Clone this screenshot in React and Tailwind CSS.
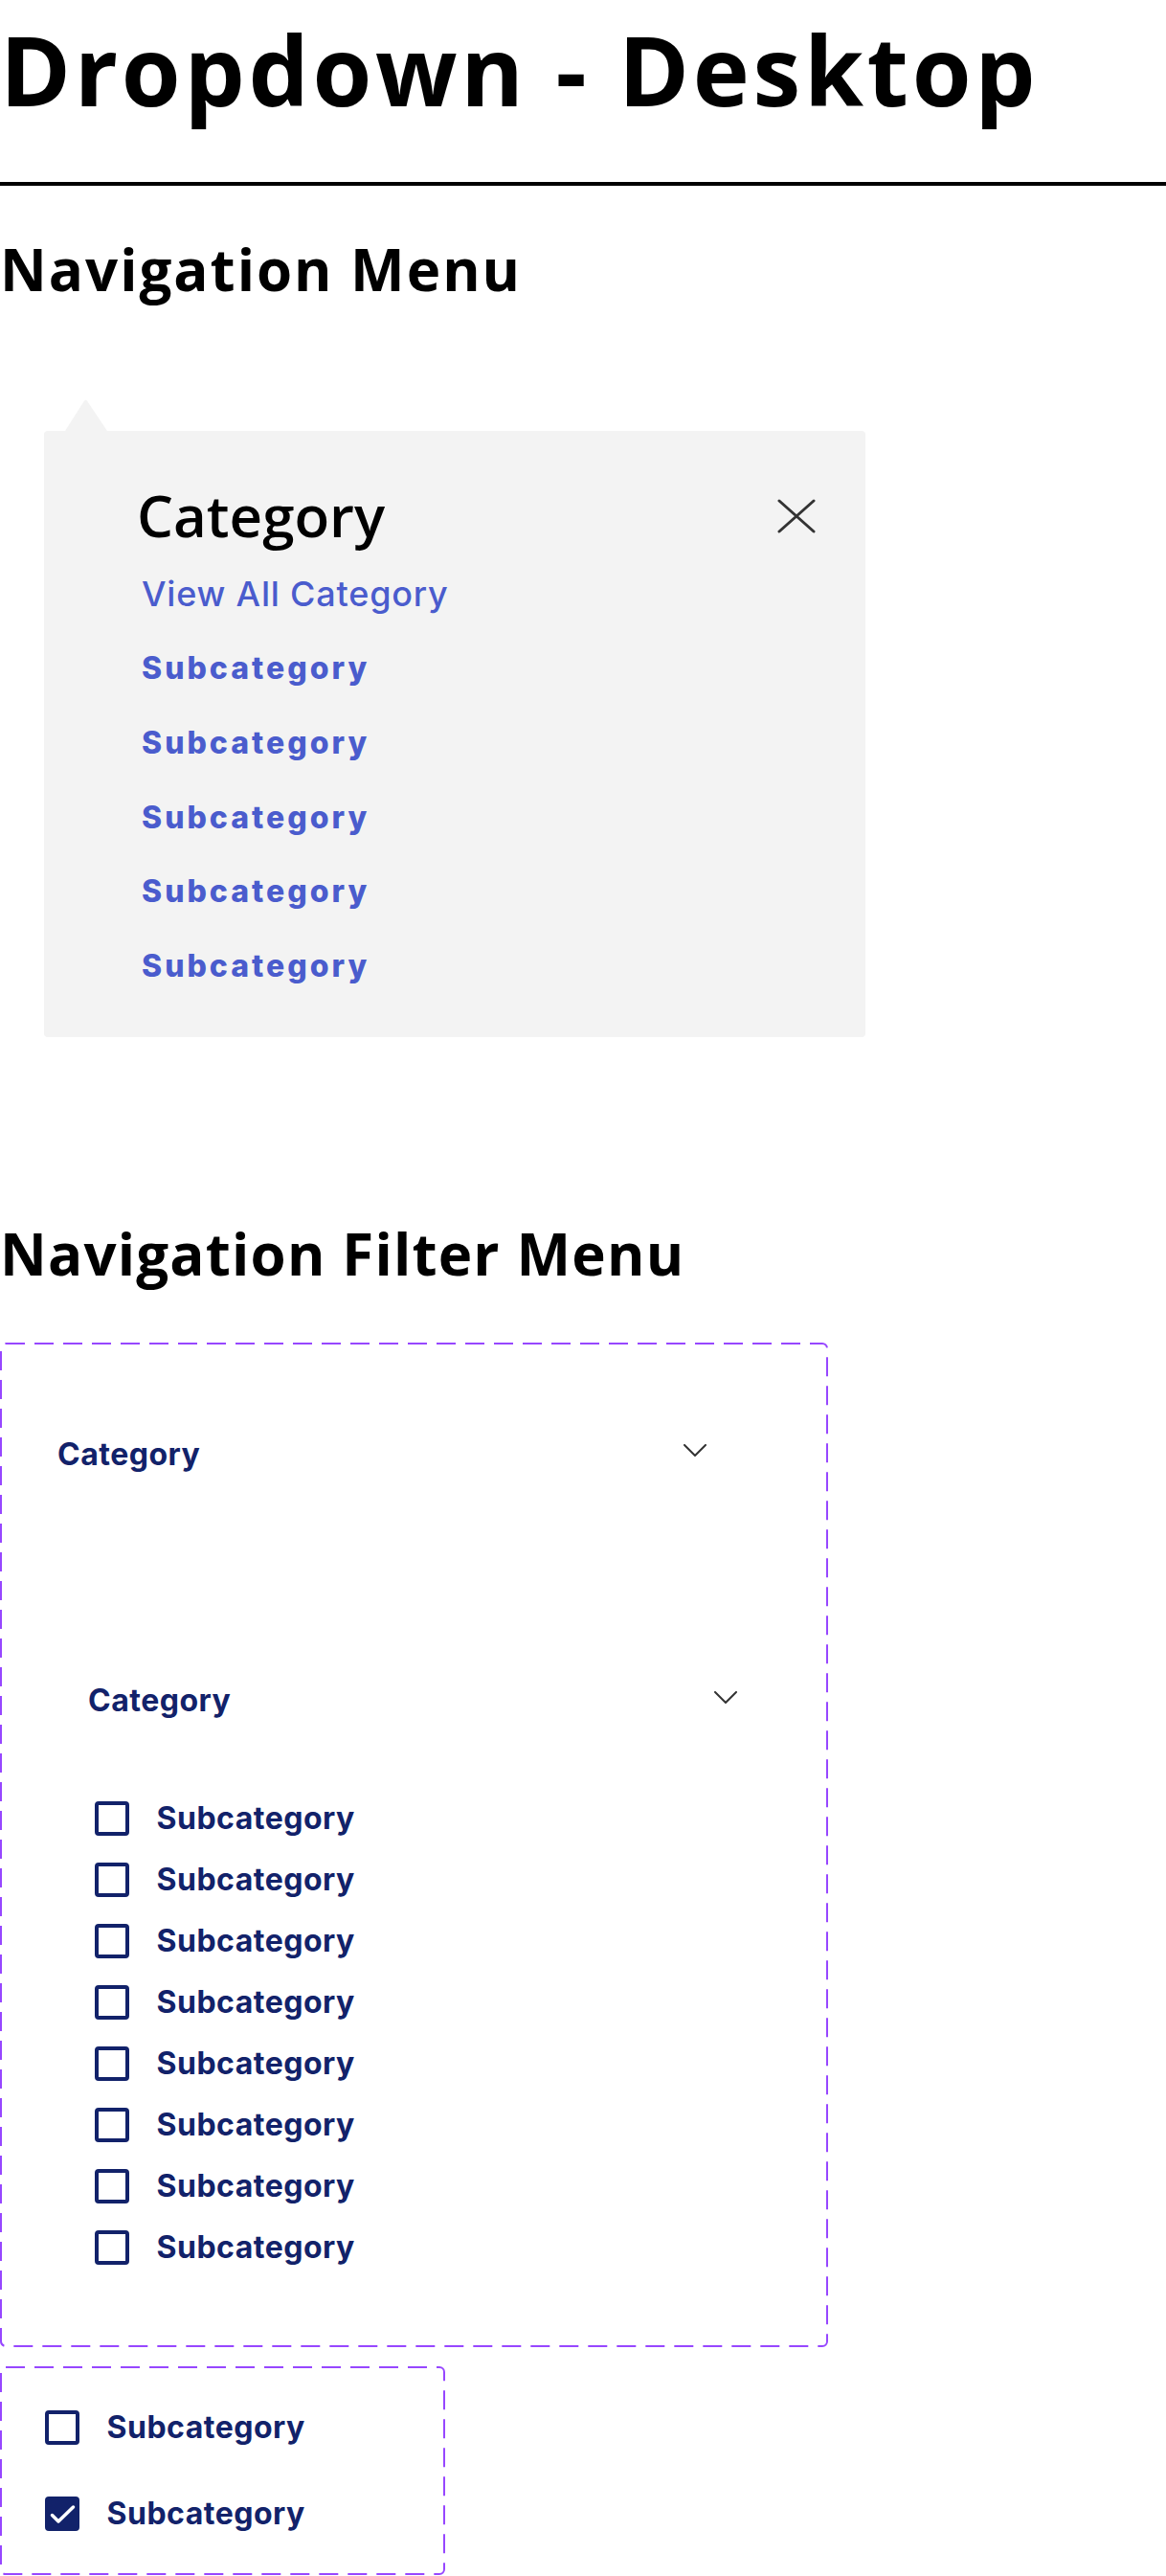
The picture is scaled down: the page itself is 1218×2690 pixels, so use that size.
const NAVY = "#12226a";

const panelItems = ["Subcategory", "Subcategory", "Subcategory", "Subcategory", "Subcategory"];
const filterItems = Array.from({ length: 8 }, () => "Subcategory");

function CloseIcon({ className }) {
  return (
    <svg className={className} width="40" height="36" viewBox="0 0 40 36" fill="none" stroke="#333333" strokeWidth="3" strokeLinecap="round">
      <path d="M2 2L38 34M38 2L2 34" />
    </svg>
  );
}

function Chevron({ className }) {
  return (
    <svg className={className} width="24" height="13" viewBox="0 0 24 13" fill="none" stroke="#333333" strokeWidth="2" strokeLinecap="round" strokeLinejoin="round">
      <path d="M1 1l11 11L23 1" />
    </svg>
  );
}

function Checkbox({ checked }) {
  if (checked) {
    return (
      <span className="block h-9 w-9 shrink-0 rounded-[4px] bg-[#12226a]">
        <svg width="36" height="36" viewBox="0 0 36 36" fill="none" stroke="#ffffff" strokeWidth="3.5" strokeLinecap="round" strokeLinejoin="round">
          <path d="M7.5 19.5L14 26L29.5 11" />
        </svg>
      </span>
    );
  }
  return <span className="block h-9 w-9 shrink-0 rounded-[4px] border-4 border-[#12226a]" />;
}

// dashed purple frame, like the component set outline
function DashedBox({ w, h, className, children }) {
  return (
    <div className={`relative flex flex-col ${className}`}>
      <svg className="pointer-events-none absolute left-0 top-0" width={w} height={h} fill="none">
        <rect x="1" y="1" width={w - 2} height={h - 2} rx="5" stroke="#9747ff" strokeWidth="2" strokeDasharray="20 10" />
      </svg>
      {children}
    </div>
  );
}

function CheckRow({ label, checked }) {
  return (
    <div className="flex items-center gap-[29px]">
      <Checkbox checked={checked} />
      <span className="text-[32px] font-bold leading-none tracking-[0.5px]" style={{ color: NAVY }}>{label}</span>
    </div>
  );
}

const NavigationMenu = () => (
  <div className="ml-[46px] mt-[105px] w-[858px]">
    <svg className="ml-[22px] block" width="44" height="34" viewBox="0 0 44 34">
      <path d="M0 34L19.6 3.2Q21.5 0.4 23.4 3.2L44 34Z" fill="#f3f3f3" />
    </svg>
    <div className="h-[633px] rounded-[4px] bg-[#f3f3f3] pl-[97px] pr-[52px] pt-[58px]">
      <div className="flex items-start justify-between">
        <h3 className="font-['Open_Sans',sans-serif] text-[60px] font-semibold leading-none">Category</h3>
        <CloseIcon className="mt-[12.5px]" />
      </div>
      <div className="ml-[5px] mt-[34px] text-[#4a5ccd]">
        <p className="text-[36px] font-medium leading-none tracking-[0.8px]">View All Category</p>
        <ul className="mt-[44px] flex flex-col gap-[45.75px]">
          {panelItems.map((item, index) => (
            <li key={index} className="text-[32px] font-extrabold leading-none tracking-[3px]">{item}</li>
          ))}
        </ul>
      </div>
    </div>
  </div>
);

const FilterMenu = () => (
  <>
    <DashedBox w={865} h={1049} className="mt-[63px] h-[1049px] w-[865px]">
      <div className="ml-[60px] mt-[101px] flex w-[678px] items-start justify-between">
        <span className="text-[32px] font-bold leading-none tracking-[0.5px] text-[#12226a]">Category</span>
        <Chevron className="mt-[4.5px]" />
      </div>
      <div className="ml-[92px] mt-[225px] flex w-[678px] items-start justify-between">
        <span className="text-[32px] font-bold leading-none tracking-[0.5px] text-[#12226a]">Category</span>
        <Chevron className="mt-[5.5px]" />
      </div>
      <div className="ml-[98.5px] mt-[89px] flex flex-col gap-[28px]">
        {filterItems.map((item, index) => (
          <CheckRow key={index} label={item} />
        ))}
      </div>
    </DashedBox>
    <DashedBox w={465} h={218} className="mt-[20px] h-[218px] w-[465px] gap-[54px] pl-[46.5px] pt-[46px]">
      <CheckRow label="Subcategory" />
      <CheckRow label="Subcategory" checked />
    </DashedBox>
  </>
);

export default function App() {
  return (
    <div className="min-h-[2690px] w-full bg-white font-['Inter',sans-serif] text-black">
      <h1 className="pt-[22px] font-['Open_Sans',sans-serif] text-[100px] font-bold leading-none tracking-[0.037em]">
        Dropdown - Desktop
      </h1>
      <div className="mt-[68px] h-1 w-full bg-black" />
      <h2 className="mt-[57px] font-['Open_Sans',sans-serif] text-[60px] font-bold leading-none tracking-[2px]">
        Navigation Menu
      </h2>
      <NavigationMenu />
      <h2 className="mt-[196px] font-['Open_Sans',sans-serif] text-[60px] font-bold leading-none tracking-[1.2px]">
        Navigation Filter Menu
      </h2>
      <FilterMenu />
    </div>
  );
}
